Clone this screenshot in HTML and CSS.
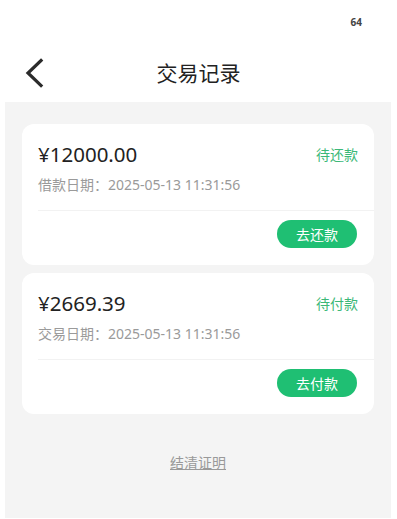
FILE: index.html
```html
<!DOCTYPE html>
<html>
    <head>
        <title>交易记录</title>
        <meta charset="utf-8">
        <link rel="stylesheet" href="styles.css">
    </head>
    <body>
        <div class="status-bar">
            <span class="status-num">64</span>
        </div>
        <div class="nav">
            <svg class="back" width="22" height="30" viewBox="0 0 22 30">
                <polyline points="17,2.5 4,15 17,27.5" fill="none" stroke="#2b2b2b" stroke-width="3.2" stroke-linecap="square"/>
            </svg>
            <div class="nav-title">交易记录</div>
        </div>
        <div class="content">
            <div class="card">
                <div class="card-top">
                    <span class="amount">¥12000.00</span>
                    <span class="state">待还款</span>
                </div>
                <div class="date">借款日期：2025-05-13 11:31:56</div>
                <div class="line"></div>
                <div class="card-foot">
                    <button class="pay-btn">去还款</button>
                </div>
            </div>
            <div class="card">
                <div class="card-top">
                    <span class="amount">¥2669.39</span>
                    <span class="state">待付款</span>
                </div>
                <div class="date">交易日期：2025-05-13 11:31:56</div>
                <div class="line"></div>
                <div class="card-foot">
                    <button class="pay-btn">去付款</button>
                </div>
            </div>
            <div class="proof">结清证明</div>
        </div>
    </body>
</html>
```

FILE: styles.css
```css
body {
    margin: 0;
    padding: 0;
    background: #ffffff;
    font-family: "Noto Sans", "Noto Sans CJK SC", sans-serif;
}

.status-bar {
    height: 44px;
    display: flex;
    justify-content: flex-end;
    align-items: center;
    padding-right: 35px;
}

.status-num {
    font-size: 10px;
    font-weight: bold;
    color: #444;
}

.nav {
    height: 58px;
    position: relative;
    display: flex;
    justify-content: center;
    align-items: center;
}

.back {
    position: absolute;
    left: 24px;
    top: 14px;
}

.nav-title {
    font-size: 21px;
    color: #222;
    margin-top: -2px;
}

.content {
    background: #f4f4f4;
    margin: 0 6px 0 5px;
    padding: 22px 17px 0 17px;
    height: 394px;
}

.card {
    background: #fff;
    border-radius: 12px;
    padding: 16px 0 17px 16px;
    margin-bottom: 8px;
}

.card-top {
    display: flex;
    justify-content: space-between;
    align-items: center;
    height: 28px;
    padding-right: 16px;
}

.amount {
    font-size: 20.5px;
    color: #222;
}

.state {
    font-size: 14px;
    color: #3cb878;
}

.date {
    margin-top: 6px;
    height: 22px;
    line-height: 22px;
    font-size: 14px;
    color: #9a9a9a;
}

.line {
    margin-top: 14px;
    height: 1px;
    background: #f2f2f2;
}

.card-foot {
    margin-top: 9px;
    display: flex;
    justify-content: flex-end;
    padding-right: 17px;
}

.pay-btn {
    width: 80px;
    height: 28px;
    border: none;
    border-radius: 14px;
    background: #1fbf73;
    color: #fff;
    font-size: 14px;
    font-family: "Noto Sans", "Noto Sans CJK SC", sans-serif;
    padding: 0;
}

.proof {
    margin-top: 39px;
    text-align: center;
    font-size: 14px;
    line-height: 20px;
    color: #999;
    text-decoration: underline;
}
```
